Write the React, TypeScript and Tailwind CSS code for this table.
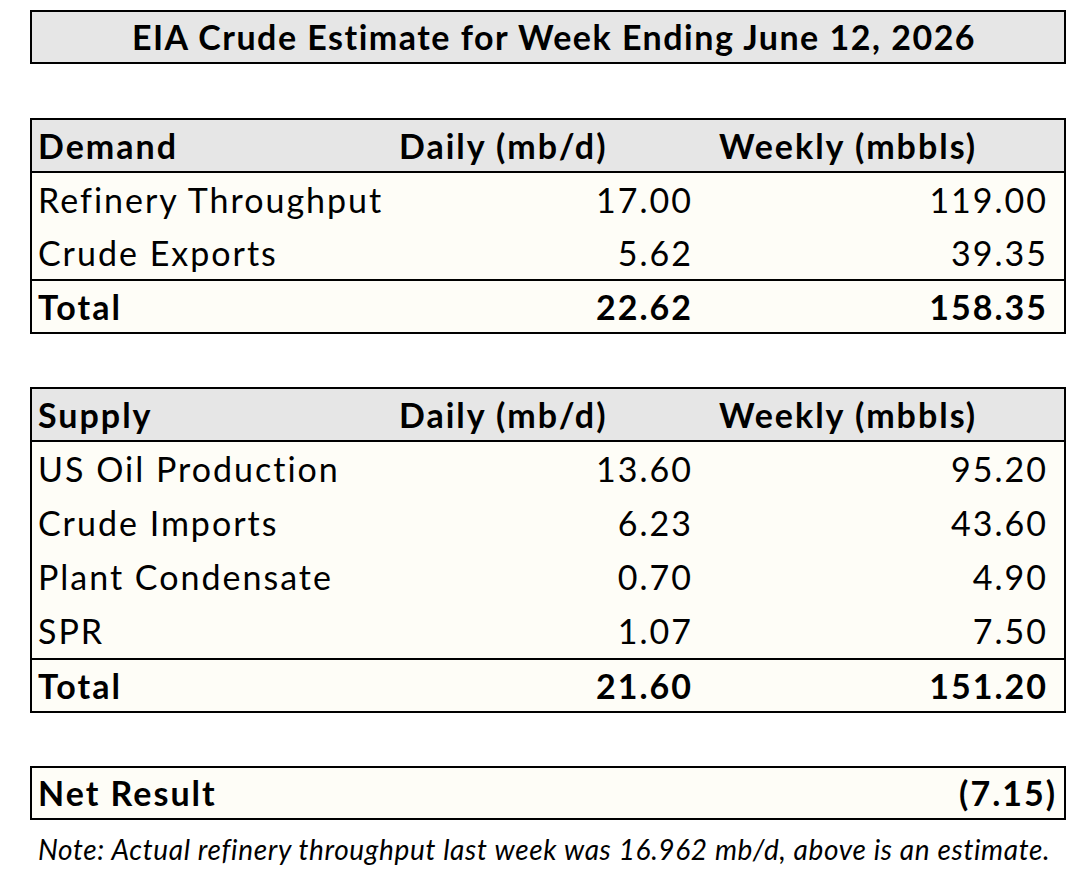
import React from "react";

type Row = { label: string; daily: string; weekly: string };

const demand: Row[] = [
  { label: "Refinery Throughput", daily: "17.00", weekly: "119.00" },
  { label: "Crude Exports", daily: "5.62", weekly: "39.35" },
];

const supply: Row[] = [
  { label: "US Oil Production", daily: "13.60", weekly: "95.20" },
  { label: "Crude Imports", daily: "6.23", weekly: "43.60" },
  { label: "Plant Condensate", daily: "0.70", weekly: "4.90" },
  { label: "SPR", daily: "1.07", weekly: "7.50" },
];

function DataRow({ row, tall, bold = false, top = false }: { row: Row; tall: boolean; bold?: boolean; top?: boolean }) {
  return (
    <div
      className={`flex items-center bg-[#fefdf7] ${tall ? "h-[54px]" : "h-[53px]"} ${top ? "border-t-2 border-black" : ""} ${bold ? "font-bold" : ""}`}
    >
      <div className="w-[360px] pl-[6px]">{row.label}</div>
      <div className="w-[306px] pr-[5px] text-right">{row.daily}</div>
      <div className="flex-1 pr-[16px] text-right">{row.weekly}</div>
    </div>
  );
}

function Section({ title, rows, total, tall = false }: { title: string; rows: Row[]; total: Row; tall?: boolean }) {
  return (
    <div className="ml-[30px] w-[1036px] border-2 border-black">
      <div className="flex h-[53px] items-center border-b-2 border-black bg-[#e6e6e6] font-bold">
        <div className="w-[360px] pl-[6px]">{title}</div>
        <div className="w-[306px] pl-[7px]">Daily (mb/d)</div>
        <div className="flex-1 pl-[21px]">Weekly (mbbls)</div>
      </div>
      {rows.map((r) => (
        <DataRow key={r.label} row={r} tall={tall} />
      ))}
      <DataRow row={total} tall={false} bold top />
    </div>
  );
}

export default function App() {
  return (
    <div className="min-h-[872px] w-[1066px] bg-white pt-[10px] text-[34px] leading-none tracking-[2px] text-black [font-family:Lato,'Open_Sans',sans-serif]">
      <div className="ml-[30px] flex h-[54px] w-[1036px] items-center justify-center border-2 border-black bg-[#e6e6e6] pl-[12px] font-bold tracking-[1.5px]">
        EIA Crude Estimate for Week Ending June 12, 2026
      </div>

      <div className="mt-[54px]">
        <Section title="Demand" rows={demand} total={{ label: "Total", daily: "22.62", weekly: "158.35" }} />
      </div>

      <div className="mt-[53px]">
        <Section title="Supply" rows={supply} total={{ label: "Total", daily: "21.60", weekly: "151.20" }} tall />
      </div>

      <div className="ml-[30px] mt-[53px] flex h-[54px] w-[1036px] items-center justify-between border-2 border-black bg-[#fefdf7] font-bold">
        <div className="pl-[6px]">Net Result</div>
        <div className="pr-[7px]">(7.15)</div>
      </div>

      <p className="mt-[15px] pl-[38px] text-[28px] italic tracking-[0.65px]">
        Note: Actual refinery throughput last week was 16.962 mb/d, above is an estimate.
      </p>
    </div>
  );
}
